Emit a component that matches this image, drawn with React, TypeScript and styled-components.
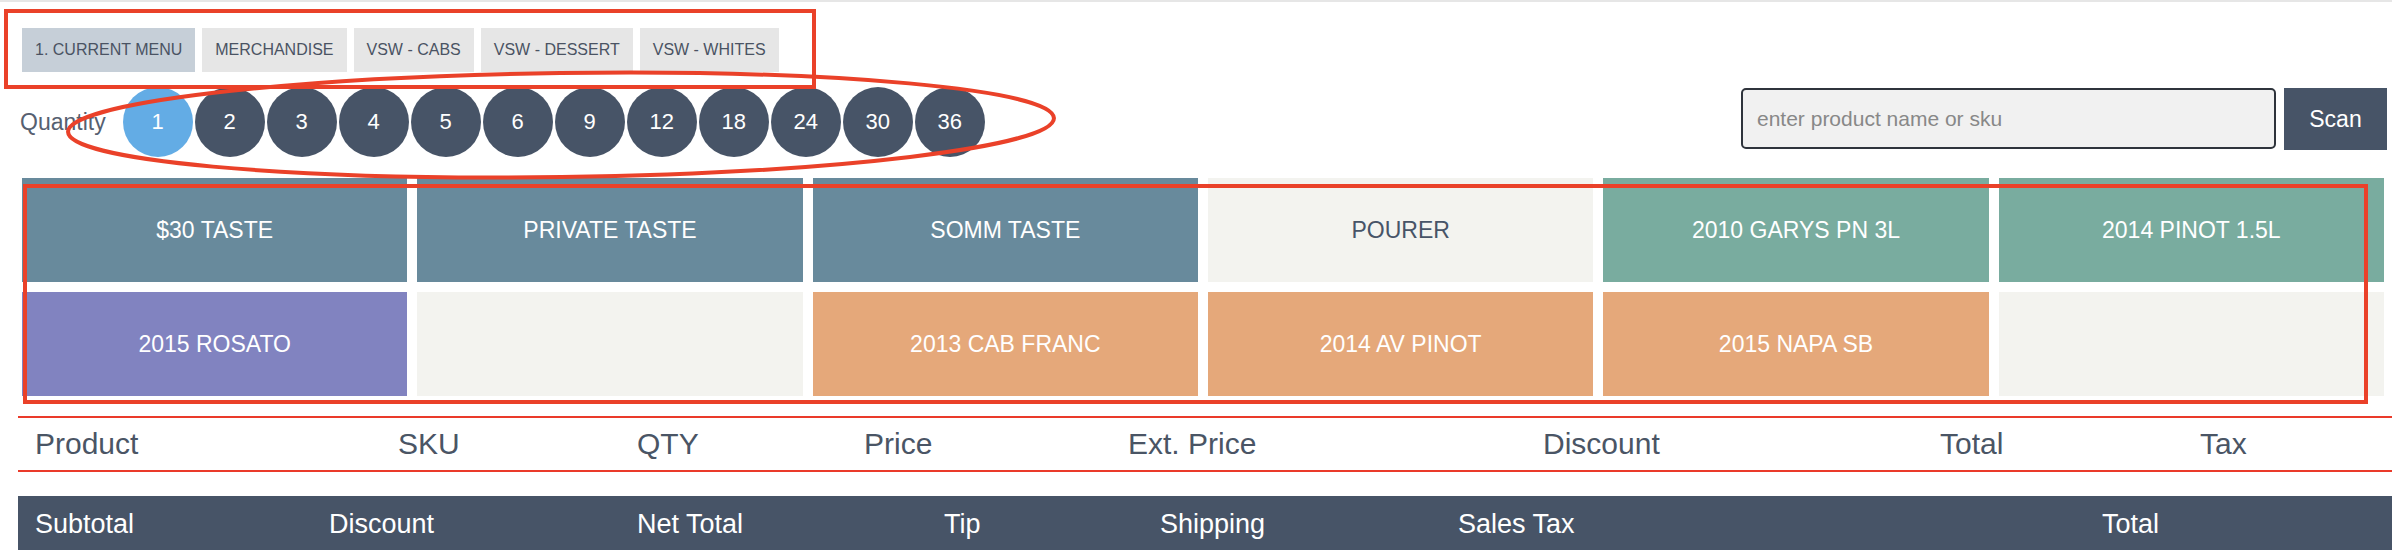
import { createGlobalStyle } from 'styled-components'
import styled from 'styled-components'

const GlobalStyle = createGlobalStyle`
  html, body {
    margin: 0;
    padding: 0;
    background: #ffffff;
  }
  body {
    font-family: "Liberation Sans", Arial, sans-serif;
  }
`

const tabs = ['1. CURRENT MENU', 'MERCHANDISE', 'VSW - CABS', 'VSW - DESSERT', 'VSW - WHITES']
const quantities = [1, 2, 3, 4, 5, 6, 9, 12, 18, 24, 30, 36]

type Tone = 'slate' | 'blank' | 'teal' | 'purple' | 'orange'

const tiles: { label: string; tone: Tone }[] = [
  { label: '$30 TASTE', tone: 'slate' },
  { label: 'PRIVATE TASTE', tone: 'slate' },
  { label: 'SOMM TASTE', tone: 'slate' },
  { label: 'POURER', tone: 'blank' },
  { label: '2010 GARYS PN 3L', tone: 'teal' },
  { label: '2014 PINOT 1.5L', tone: 'teal' },
  { label: '2015 ROSATO', tone: 'purple' },
  { label: '', tone: 'blank' },
  { label: '2013 CAB FRANC', tone: 'orange' },
  { label: '2014 AV PINOT', tone: 'orange' },
  { label: '2015 NAPA SB', tone: 'orange' },
  { label: '', tone: 'blank' },
]

const toneColors: Record<Tone, string> = {
  slate: '#688a9c',
  blank: '#f3f3ef',
  teal: '#79ac9f',
  purple: '#8183c0',
  orange: '#e5a87a',
}

const headerCols = ['Product', 'SKU', 'QTY', 'Price', 'Ext. Price', 'Discount', 'Total', 'Tax']
const footerCols = ['Subtotal', 'Discount', 'Net Total', 'Tip', 'Shipping', 'Sales Tax', 'Total']

const App = () => {
  return (
    <Page>
      <GlobalStyle />
      <TabBar>
        {tabs.map((t, i) => (
          <Tab key={t} $active={i === 0}>{t}</Tab>
        ))}
      </TabBar>

      <QuantityRow>
        <QuantityLabel>Quantity</QuantityLabel>
        <Circles>
          {quantities.map((q) => (
            <QtyCircle key={q} $active={q === 1}>{q}</QtyCircle>
          ))}
        </Circles>
        <SearchWrap>
          <SearchInput placeholder="enter product name or sku" type="text" />
          <ScanButton>Scan</ScanButton>
        </SearchWrap>
      </QuantityRow>

      <TileGrid>
        {tiles.map((t, i) => (
          <Tile key={i} $tone={t.tone}>{t.label}</Tile>
        ))}
      </TileGrid>

      <TableHeader>
        {headerCols.map((c) => (
          <HeaderCell key={c}>{c}</HeaderCell>
        ))}
      </TableHeader>

      <TotalsBar>
        {footerCols.map((c, i) => (
          <TotalsCell key={i}>{c}</TotalsCell>
        ))}
      </TotalsBar>

      <Annotations width="2392" height="550" viewBox="0 0 2392 550">
        <rect x="6" y="9" width="808" height="76" fill="none" stroke="#ea4129" strokeWidth="4" />
        <ellipse
          cx="561"
          cy="123"
          rx="493"
          ry="52"
          fill="none"
          stroke="#ea4129"
          strokeWidth="4"
          transform="rotate(-0.8 561 123)"
        />
        <rect x="25" y="184" width="2341" height="216" fill="none" stroke="#ea4129" strokeWidth="4" />
      </Annotations>
    </Page>
  )
}

const Page = styled.div`
  position: relative;
  width: 2392px;
  height: 550px;
  overflow: hidden;
  border-top: 2px solid #e6e6e6;
  box-sizing: border-box;
`

const TabBar = styled.div`
  display: flex;
  column-gap: 7px;
  margin-top: 26px;
  padding-left: 22px;
`

const Tab = styled.div<{ $active: boolean }>`
  align-items: center;
  background-color: ${(p) => (p.$active ? '#c6cfd8' : '#e6e6e6')};
  color: #4a5363;
  display: flex;
  font-size: 16px;
  height: 44px;
  padding: 0 13px;
`

const QuantityRow = styled.div`
  align-items: flex-start;
  display: flex;
  margin-top: 15px;
  padding: 0 5px 0 20px;
`

const QuantityLabel = styled.span`
  color: #566070;
  font-size: 23px;
  line-height: 70px;
  margin-right: 17px;
`

const Circles = styled.div`
  column-gap: 2px;
  display: flex;
`

const QtyCircle = styled.div<{ $active: boolean }>`
  align-items: center;
  background-color: ${(p) => (p.$active ? '#63ace5' : '#475467')};
  border-radius: 50%;
  color: #ffffff;
  display: flex;
  font-size: 22px;
  height: 70px;
  justify-content: center;
  width: 70px;
`

const SearchWrap = styled.div`
  column-gap: 8px;
  display: flex;
  margin-left: auto;
  margin-top: 1px;
`

const SearchInput = styled.input`
  background-color: #f1f1f1;
  border: 2px solid #2f343c;
  border-radius: 5px;
  box-sizing: border-box;
  color: #333333;
  font-family: inherit;
  font-size: 21px;
  height: 61px;
  outline: none;
  padding: 0 14px;
  width: 535px;

  &::placeholder {
    color: #888888;
  }
`

const ScanButton = styled.button`
  background-color: #475467;
  border: none;
  color: #ffffff;
  font-family: inherit;
  font-size: 23px;
  height: 62px;
  padding: 0;
  width: 103px;
`

const TileGrid = styled.div`
  display: grid;
  gap: 10px;
  grid-template-columns: repeat(6, 1fr);
  grid-auto-rows: 104px;
  margin-top: 21px;
  padding-left: 22px;
  width: 2362px;
`

const Tile = styled.div<{ $tone: Tone }>`
  align-items: center;
  background-color: ${(p) => toneColors[p.$tone]};
  color: ${(p) => (p.$tone === 'blank' ? '#475467' : '#ffffff')};
  display: flex;
  font-size: 23px;
  justify-content: center;
`

const TableHeader = styled.div`
  align-items: center;
  border-bottom: 2px solid #ea3a2a;
  border-top: 2px solid #ea3a2a;
  box-sizing: border-box;
  display: grid;
  grid-template-columns: 363px 239px 227px 264px 415px 397px 260px 1fr;
  height: 56px;
  margin-left: 18px;
  margin-top: 20px;
`

const HeaderCell = styled.div`
  color: #4a5565;
  font-size: 30px;
  padding-left: 17px;
`

const TotalsBar = styled.div`
  align-items: center;
  background-color: #475467;
  display: grid;
  grid-template-columns: 294px 308px 307px 216px 298px 644px 1fr;
  height: 56px;
  margin-left: 18px;
  margin-top: 24px;
`

const TotalsCell = styled.div`
  color: #ffffff;
  font-size: 27px;
  padding-left: 17px;
`

const Annotations = styled.svg`
  left: 0;
  pointer-events: none;
  position: absolute;
  top: 0;
`

export default App
